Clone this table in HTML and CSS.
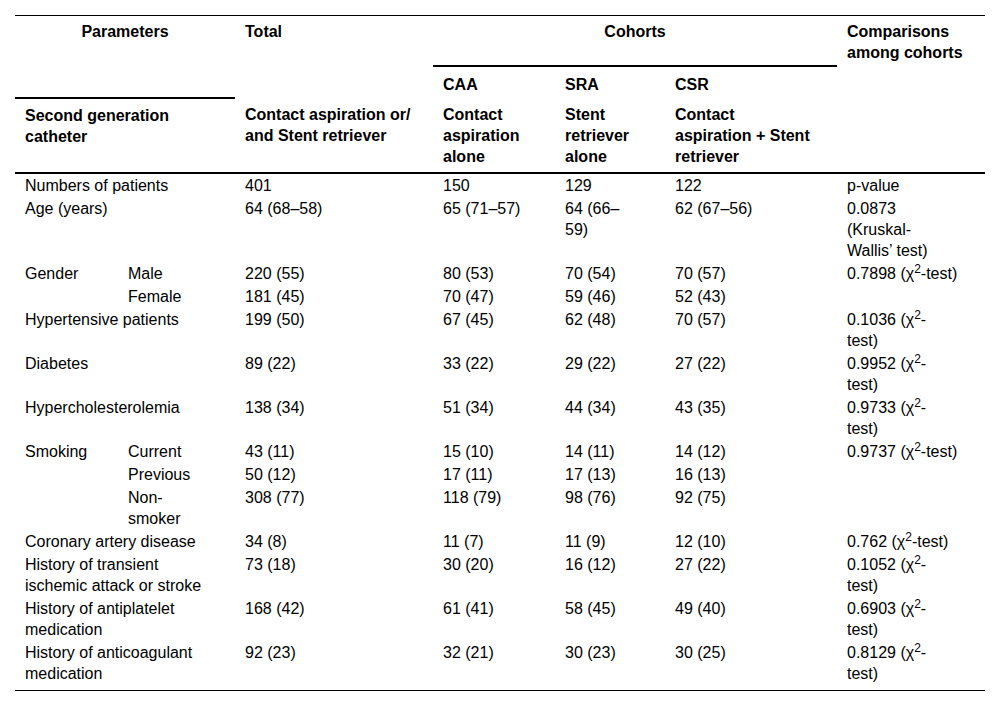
FILE: index.html
```html
<!DOCTYPE html>
<html lang="en">
<head>
<meta charset="utf-8">
<title>Baseline characteristics</title>
<link rel="stylesheet" href="styles.css">
</head>
<body>
<table class="data">
  <colgroup>
    <col class="c1"><col class="c2"><col class="c3"><col class="c4"><col class="c5"><col class="c6"><col class="c7">
  </colgroup>
  <thead>
    <tr class="h1">
      <th colspan="2" class="center">Parameters</th>
      <th>Total</th>
      <th colspan="3" class="center rule">Cohorts</th>
      <th>Comparisons<br>among cohorts</th>
    </tr>
    <tr class="h2">
      <th colspan="2" class="rule"></th>
      <th></th>
      <th>CAA</th>
      <th>SRA</th>
      <th>CSR</th>
      <th></th>
    </tr>
    <tr class="h3">
      <th colspan="2">Second generation<br>catheter</th>
      <th>Contact aspiration or/<br>and Stent retriever</th>
      <th>Contact<br>aspiration<br>alone</th>
      <th>Stent<br>retriever<br>alone</th>
      <th>Contact<br>aspiration + Stent<br>retriever</th>
      <th></th>
    </tr>
  </thead>
  <tbody>
    <tr>
      <td colspan="2">Numbers of patients</td>
      <td>401</td><td>150</td><td>129</td><td>122</td>
      <td>p-value</td>
    </tr>
    <tr>
      <td colspan="2">Age (years)</td>
      <td>64 (68–58)</td><td>65 (71–57)</td><td>64 (66–<br>59)</td><td>62 (67–56)</td>
      <td>0.0873<br>(Kruskal-<br>Wallis’ test)</td>
    </tr>
    <tr>
      <td>Gender</td><td>Male</td>
      <td>220 (55)</td><td>80 (53)</td><td>70 (54)</td><td>70 (57)</td>
      <td>0.7898 (χ<sup>2</sup>-test)</td>
    </tr>
    <tr>
      <td></td><td>Female</td>
      <td>181 (45)</td><td>70 (47)</td><td>59 (46)</td><td>52 (43)</td>
      <td></td>
    </tr>
    <tr>
      <td colspan="2">Hypertensive patients</td>
      <td>199 (50)</td><td>67 (45)</td><td>62 (48)</td><td>70 (57)</td>
      <td>0.1036 (χ<sup>2</sup>-<br>test)</td>
    </tr>
    <tr>
      <td colspan="2">Diabetes</td>
      <td>89 (22)</td><td>33 (22)</td><td>29 (22)</td><td>27 (22)</td>
      <td>0.9952 (χ<sup>2</sup>-<br>test)</td>
    </tr>
    <tr>
      <td colspan="2">Hypercholesterolemia</td>
      <td>138 (34)</td><td>51 (34)</td><td>44 (34)</td><td>43 (35)</td>
      <td>0.9733 (χ<sup>2</sup>-<br>test)</td>
    </tr>
    <tr>
      <td>Smoking</td><td>Current</td>
      <td>43 (11)</td><td>15 (10)</td><td>14 (11)</td><td>14 (12)</td>
      <td>0.9737 (χ<sup>2</sup>-test)</td>
    </tr>
    <tr>
      <td></td><td>Previous</td>
      <td>50 (12)</td><td>17 (11)</td><td>17 (13)</td><td>16 (13)</td>
      <td></td>
    </tr>
    <tr>
      <td></td><td>Non-<br>smoker</td>
      <td>308 (77)</td><td>118 (79)</td><td>98 (76)</td><td>92 (75)</td>
      <td></td>
    </tr>
    <tr>
      <td colspan="2">Coronary artery disease</td>
      <td>34 (8)</td><td>11 (7)</td><td>11 (9)</td><td>12 (10)</td>
      <td>0.762 (χ<sup>2</sup>-test)</td>
    </tr>
    <tr>
      <td colspan="2">History of transient<br>ischemic attack or stroke</td>
      <td>73 (18)</td><td>30 (20)</td><td>16 (12)</td><td>27 (22)</td>
      <td>0.1052 (χ<sup>2</sup>-<br>test)</td>
    </tr>
    <tr>
      <td colspan="2">History of antiplatelet<br>medication</td>
      <td>168 (42)</td><td>61 (41)</td><td>58 (45)</td><td>49 (40)</td>
      <td>0.6903 (χ<sup>2</sup>-<br>test)</td>
    </tr>
    <tr class="last">
      <td colspan="2">History of anticoagulant<br>medication</td>
      <td>92 (23)</td><td>32 (21)</td><td>30 (23)</td><td>30 (25)</td>
      <td>0.8129 (χ<sup>2</sup>-<br>test)</td>
    </tr>
  </tbody>
</table>
</body>
</html>
```

FILE: styles.css
```css
html, body {
  margin: 0;
  padding: 0;
  background: #ffffff;
}

body {
  padding: 15px 15px 0 15px;
  font-family: "Liberation Sans", Arial, sans-serif;
  font-size: 16px;
  color: #000000;
}

.data {
  width: 970px;
  table-layout: fixed;
  border-collapse: collapse;
  border-top: 1px solid #000;
  border-bottom: 1px solid #000;
}

.c1 { width: 103px; }
.c2 { width: 117px; }
.c3 { width: 198px; }
.c4 { width: 122px; }
.c5 { width: 110px; }
.c6 { width: 172px; }
.c7 { width: 148px; }

.data th,
.data td {
  text-align: left;
  vertical-align: top;
  line-height: 21px;
  padding: 1px 8px 1px 10px;
}

.data th {
  font-weight: bold;
}

.data th.center {
  text-align: center;
  padding-left: 10px;
  padding-right: 10px;
}

.data th.rule {
  border-bottom: 2px solid #000;
}

.data .h1 th {
  padding-top: 5px;
  padding-bottom: 3px;
}

.data .h2 th {
  padding-top: 7px;
  padding-bottom: 3px;
}

.data .h3 th {
  padding-top: 6px;
  padding-bottom: 5px;
  border-bottom: 2px solid #000;
}

.data .last td {
  padding-bottom: 6px;
}

.data sup {
  font-size: 0.75em;
  line-height: 0;
  vertical-align: 0.5em;
}
```
